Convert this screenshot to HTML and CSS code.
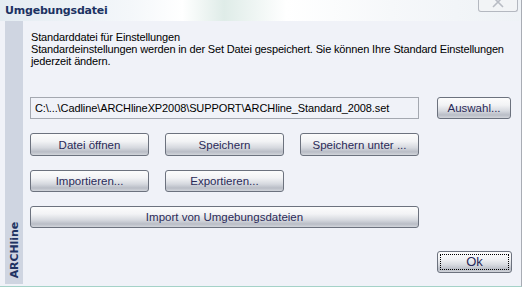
FILE: index.html
```html
<!DOCTYPE html>
<html lang="de">

<head>
    <meta charset="UTF-8">
    <meta name="viewport" content="width=device-width, initial-scale=1.0">
    <title>Umgebungsdatei</title>
    <link rel="stylesheet" href="styles.css">
</head>

<body>
    <div class="dialogo">
        <div class="titulo">
            <div class="titulo-texto">Umgebungsdatei</div>
            <div class="cerrar">
                <svg width="14" height="10" viewBox="0 0 14 10">
                    <path d="M2 -3 L12 7 M12 -3 L2 7" stroke="#b8bcc4" stroke-width="1.6" fill="none" />
                </svg>
            </div>
        </div>

        <div class="cuerpo">
            <div class="banda">
                <span class="banda-texto">ARCHline</span>
            </div>

            <div class="contenido">
                <div class="descripcion">
                    Standarddatei für Einstellungen<br>
                    Standardeinstellungen werden in der Set Datei gespeichert. Sie können Ihre Standard Einstellungen<br>
                    jederzeit ändern.
                </div>

                <div class="fila fila-archivo">
                    <div class="campo">C:\...\Cadline\ARCHlineXP2008\SUPPORT\ARCHline_Standard_2008.set</div>
                    <button class="boton boton-chico">Auswahl...</button>
                </div>

                <div class="fila fila-uno">
                    <button class="boton">Datei öffnen</button>
                    <button class="boton">Speichern</button>
                    <button class="boton">Speichern unter ...</button>
                </div>

                <div class="fila fila-dos">
                    <button class="boton">Importieren...</button>
                    <button class="boton">Exportieren...</button>
                </div>

                <div class="fila fila-tres">
                    <button class="boton boton-ancho">Import von Umgebungsdateien</button>
                </div>

                <div class="fila fila-ok">
                    <button class="boton boton-chico boton-foco"><span>Ok</span></button>
                </div>
            </div>
        </div>
    </div>
</body>

</html>
```

FILE: styles.css
```css
body {
    margin: 0;
    padding: 0;
    background-color: #ffffff;
    font-family: "Liberation Sans", Arial, sans-serif;
}

.dialogo {
    width: 521px;
    height: 286px;
    border-right: 1px solid #a8acb4;
    border-bottom: 1px solid #a4d2c8;
    box-shadow: 0 2px 0 #9a9ea4;
    background-color: #f0f2f8;
    display: flex;
    flex-direction: column;
}

.titulo {
    height: 21px;
    display: flex;
    justify-content: space-between;
    align-items: flex-start;
    background: linear-gradient(90deg, #e4ecf2 0%, #f4f7fa 25%, #ffffff 35%, #dfece8 43%, #ffffff 55%, #f6f8fa 75%, #eef2f6 100%);
}

.titulo-texto {
    padding: 4px 0 0 5px;
    font-family: "DejaVu Sans", sans-serif;
    font-size: 11px;
    font-weight: bold;
    letter-spacing: -0.2px;
    color: #1c3262;
}

.cerrar {
    width: 38px;
    height: 11px;
    margin-right: 3px;
    border: 1px solid #b4b8c0;
    border-top: none;
    border-radius: 0 0 3px 3px;
    background-color: #f2f4f6;
    display: flex;
    justify-content: center;
    align-items: flex-start;
    overflow: hidden;
}

.cuerpo {
    flex: 1;
    display: flex;
    padding-bottom: 2px;
}

.banda {
    flex: 0 0 18px;
    margin-left: 5px;
    background-color: #cfd5e1;
    display: flex;
    align-items: flex-end;
    justify-content: center;
    padding-bottom: 6px;
    box-sizing: border-box;
}

.banda-texto {
    writing-mode: vertical-rl;
    transform: rotate(180deg);
    font-family: "DejaVu Sans", sans-serif;
    font-size: 11px;
    font-weight: bold;
    letter-spacing: -0.1px;
    color: #1e3262;
}

.contenido {
    flex: 1;
    min-width: 0;
    padding: 10px 9px 0 7px;
}

.descripcion {
    font-size: 11px;
    line-height: 12px;
    letter-spacing: -0.15px;
    color: #000000;
    padding-left: 1px;
    white-space: nowrap;
}

.fila {
    display: flex;
    gap: 16px;
}

.fila-archivo {
    margin-top: 30px;
    gap: 18px;
    align-items: center;
}

.fila-uno {
    margin-top: 14px;
}

.fila-uno .boton {
    height: 23px;
}

.fila-dos,
.fila-tres {
    margin-top: 14px;
}

.fila-ok {
    margin-top: 23px;
    justify-content: flex-end;
}

.campo {
    width: 389px;
    height: 22px;
    box-sizing: border-box;
    border: 1px solid #a4a8b0;
    padding: 0 4px;
    font-size: 11px;
    letter-spacing: -0.1px;
    line-height: 20px;
    color: #000000;
    white-space: nowrap;
    overflow: hidden;
}

.boton {
    flex: 0 0 auto;
    width: 119px;
    height: 22px;
    margin: 0;
    padding: 0;
    box-sizing: border-box;
    border: 1px solid #6c727e;
    border-radius: 3px;
    background: linear-gradient(180deg, #fcfcfc 0%, #f2f3f5 35%, #d6d9df 65%, #b9bdc6 85%, #d2d5db 100%);
    font-family: "Liberation Sans", Arial, sans-serif;
    font-size: 11.5px;
    color: #2a2a58;
    text-align: center;
    white-space: nowrap;
}

.boton-chico {
    width: 74px;
}

.fila-ok .boton-chico {
    width: 75px;
}

.boton-ancho {
    width: 389px;
}

.boton-foco {
    padding: 2px;
}

.boton-foco span {
    display: block;
    height: 100%;
    border: 1px dotted #000000;
    box-sizing: border-box;
    line-height: 14px;
    font-size: 13px;
    color: #2a2a58;
}
```
